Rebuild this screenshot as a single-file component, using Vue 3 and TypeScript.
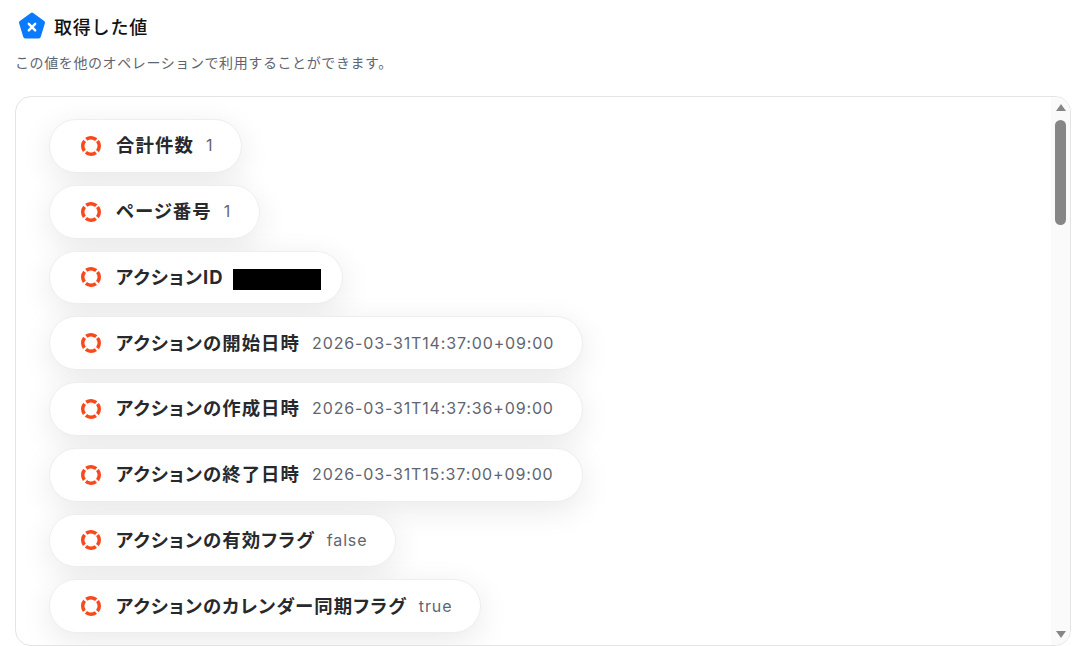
<template>
  <div class="page">
    <header class="heading">
      <svg class="logo" viewBox="0 0 28 28" width="28" height="28">
        <path d="M14 2.6 25 10.6 20.8 24.4H7.2L3 10.6Z" fill="#0a7bff" stroke="#0a7bff" stroke-width="4" stroke-linejoin="round" />
        <path d="M10.8 11.8 17.2 18.4M17.2 11.8 10.8 18.4" fill="none" stroke="#fff" stroke-width="2.4" stroke-linecap="round" />
      </svg>
      <h1>取得した値</h1>
    </header>
    <p class="note">この値を他のオペレーションで利用することができます。</p>
    <section class="panel">
      <ul class="list">
        <li v-for="item in items" :key="item.label" class="pill">
          <svg class="ring" viewBox="0 0 22 22" width="22" height="22">
            <circle cx="11" cy="11" r="8.2" fill="none" stroke="#f9481a" stroke-width="3.6" stroke-dasharray="10.6 2.28" stroke-dashoffset="-1.14" transform="rotate(-45 11 11)" />
          </svg>
          <span class="label">{{ item.label }}</span>
          <span v-if="item.hidden" class="masked"></span>
          <span v-else class="value">{{ item.value }}</span>
        </li>
      </ul>
      <div class="scrollbar">
        <span class="arrow up"></span>
        <span class="thumb"></span>
        <span class="arrow down"></span>
      </div>
    </section>
  </div>
</template>

<script setup lang="ts">
interface Item {
  label: string;
  value?: string;
  hidden?: boolean;
}

const items: Item[] = [
  { label: '合計件数', value: '1' },
  { label: 'ページ番号', value: '1' },
  { label: 'アクションID', hidden: true },
  { label: 'アクションの開始日時', value: '2026-03-31T14:37:00+09:00' },
  { label: 'アクションの作成日時', value: '2026-03-31T14:37:36+09:00' },
  { label: 'アクションの終了日時', value: '2026-03-31T15:37:00+09:00' },
  { label: 'アクションの有効フラグ', value: 'false' },
  { label: 'アクションのカレンダー同期フラグ', value: 'true' },
];
</script>

<style>
html,
body {
  margin: 0;
  background: #fff;
  overflow: hidden;
}
</style>

<style scoped>
.page {
  height: 646px;
  padding: 0 17px 0 15px;
  box-sizing: border-box;
  display: flex;
  flex-direction: column;
  font-family: Inter, "Noto Sans CJK JP", sans-serif;
  color: #27292d;
}

.heading {
  display: flex;
  align-items: center;
  gap: 8px;
  height: 52px;
  padding-left: 3px;
}

.logo {
  flex: none;
}

h1 {
  margin: 0;
  font-size: 18px;
  font-weight: 500;
  letter-spacing: 0.8px;
  color: #111;
}

.note {
  margin: 0;
  font-size: 14px;
  line-height: 22px;
  letter-spacing: 0.6px;
  color: #5f6570;
}

.panel {
  flex: 1;
  min-height: 0;
  margin-top: 22px;
  display: flex;
  border: 1px solid #e2e4e8;
  border-radius: 16px;
  overflow: hidden;
}

.list {
  flex: 1;
  list-style: none;
  margin: 0;
  padding: 22px 0 0 33px;
  display: flex;
  flex-direction: column;
  align-items: flex-start;
  gap: 12px;
}

.pill {
  height: 53.75px;
  box-sizing: border-box;
  padding: 0 28px 0 30px;
  display: flex;
  align-items: center;
  background: #fff;
  border: 1px solid #eceef2;
  border-radius: 27px;
  box-shadow: 0 8px 32px rgba(0, 0, 0, 0.09);
}

.ring {
  flex: none;
  margin-right: 14px;
}

.label {
  font-size: 18.4px;
  font-weight: 700;
  letter-spacing: 1.1px;
  font-feature-settings: "palt";
  line-height: 24px;
  margin-top: -1px;
}

.value {
  margin-left: 12px;
  margin-top: -1px;
  font-size: 16px;
  letter-spacing: 0.85px;
  color: #5f6570;
}

.masked {
  margin: 5px -7px 0 9px;
  width: 88px;
  height: 21px;
  background: #000;
}

.scrollbar {
  flex: none;
  width: 19px;
  display: flex;
  flex-direction: column;
  align-items: center;
  padding: 7px 0;
  box-sizing: border-box;
  background: #fafafa;
}

.arrow {
  flex: none;
  width: 0;
  height: 0;
  border-left: 5px solid transparent;
  border-right: 5px solid transparent;
}

.up {
  border-bottom: 7px solid #868686;
}

.down {
  margin-top: auto;
  border-top: 7px solid #868686;
}

.thumb {
  width: 11px;
  height: 105px;
  margin-top: 9px;
  border-radius: 6px;
  background: #868686;
}
</style>
